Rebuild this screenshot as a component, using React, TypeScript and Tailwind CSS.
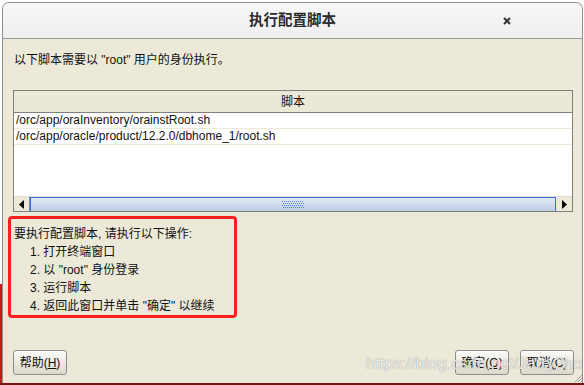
import React from 'react';

const font = { fontFamily: '"Liberation Sans", "Noto Sans CJK SC", sans-serif' };

const Btn: React.FC<{ label: string; mnemonic: string }> = ({ label, mnemonic }) => (
  <button className="w-[54px] h-[25px] rounded-[3px] border border-[#8d8d8d] bg-gradient-to-b from-[#fbfbf8] to-[#dcd9ca] text-[12px] text-[#111] flex items-center justify-center shadow-[inset_0_1px_0_#fff]">
    {label}(<span className="underline">{mnemonic}</span>)
  </button>
);

export default function App() {
  const rows = ['/orc/app/oraInventory/orainstRoot.sh', '/orc/app/oracle/product/12.2.0/dbhome_1/root.sh'];
  const steps = ['打开终端窗口', '以 "root" 身份登录', '运行脚本', '返回此窗口并单击 "确定" 以继续'];

  return (
    <div className="w-[584px] h-[385px] flex flex-col bg-white overflow-hidden relative" style={font}>
      <div className="flex flex-1">
        <div className="w-[2px] flex flex-col">
          <div className="flex-1 bg-white" />
          <div className="h-[99px] bg-[#c41a1a]" />
        </div>

        <div className="w-[581px] mt-[2px] flex flex-col border-x border-t border-[#8f8f8f] rounded-t-[7px] overflow-hidden">
          {/* title bar */}
          <div className="h-[36px] flex items-center justify-center relative bg-gradient-to-b from-[#f7f7f7] to-[#efefef] border-b border-[#9a9a9a]">
            <span className="text-[14.5px] font-bold text-[#2b2b2b]">执行配置脚本</span>
            <svg className="absolute left-[500px] top-[14px]" width="8" height="8" viewBox="0 0 8 8">
              <path d="M1 1 L7 7 M7 1 L1 7" stroke="#333" strokeWidth="2" />
            </svg>
          </div>

          {/* body */}
          <div className="flex-1 bg-[#ece9d8] flex flex-col pl-[10px] pr-[8px] pt-[13px] pb-[8px] text-[12px] text-[#111]">
            <p className="leading-[16px] pl-[1px]">以下脚本需要以 "root" 用户的身份执行。</p>

            <div className="mt-[22px] w-[560px] h-[122px] border border-[#808080] flex flex-col bg-white">
              <div className="h-[22px] bg-[#ebe8d8] border-b border-[#808080] flex items-center justify-center">脚本</div>
              <div className="flex-1 flex flex-col">
                {rows.map(r => (
                  <div key={r} className="h-[16px] leading-[15px] pl-[2px] border-b border-[#ece9d8]">{r}</div>
                ))}
              </div>
              <div className="h-[15px] flex border-t border-[#dcdcdc]">
                <div className="w-[16px] bg-[#ece9d8] flex items-center justify-center border-r border-[#6d86c4]">
                  <svg width="6" height="9" viewBox="0 0 6 9"><path d="M5 0 L0 4.5 L5 9 Z" fill="#000" /></svg>
                </div>
                <div className="flex-1 bg-gradient-to-b from-[#e3eaf4] to-[#bccde6] border-t border-x border-[#3c6fc9] flex items-center justify-center">
                  <svg width="22" height="9" viewBox="0 0 22 9">
                    {[0, 1, 2, 3].map(y =>
                      [0, 1, 2, 3, 4, 5, 6, 7, 8, 9, 10].map(x => (
                        <rect key={`${x}-${y}`} x={x * 2 + (y % 2)} y={y * 2 + 1} width="1" height="1" fill="#4f86dc" />
                      ))
                    )}
                  </svg>
                </div>
                <div className="w-[16px] bg-[#ece9d8] flex items-center justify-center">
                  <svg width="6" height="9" viewBox="0 0 6 9"><path d="M1 0 L6 4.5 L1 9 Z" fill="#000" /></svg>
                </div>
              </div>
            </div>

            <div className="mt-[4px] -ml-[5px] w-[229px] border-[3px] border-[#ff2020] rounded-[4px] pl-[3px] pt-[6px] leading-[18px]">
              <p>要执行配置脚本, 请执行以下操作:</p>
              <ol className="pl-[16px]">
                {steps.map((s, i) => (
                  <li key={s}>{i + 1}. {s}</li>
                ))}
              </ol>
            </div>

            <div className="mt-auto flex items-center">
              <Btn label="帮助" mnemonic="H" />
              <div className="ml-auto flex gap-[11px]">
                <Btn label="确定" mnemonic="O" />
                <Btn label="取消" mnemonic="C" />
              </div>
            </div>
          </div>
        </div>
        <div className="flex-1 bg-white" />
      </div>
      <div className="h-[2px] bg-[#7a1414]" />

      <span className="absolute left-[366px] top-[351px] text-[16.5px] text-[#f4f4f4]/90 [text-shadow:0_0_1px_rgba(110,110,110,0.8)] pointer-events-none">
        https://blog.csdn.net/Jarry2ho
      </span>
      <svg className="absolute left-[574px] top-[374px]" width="8" height="9" viewBox="0 0 8 9">
        <path d="M8 1 L1 8 M8 4 L4 8 M8 7 L7 8" stroke="#9a9a9a" strokeWidth="1" />
      </svg>
    </div>
  );
}
